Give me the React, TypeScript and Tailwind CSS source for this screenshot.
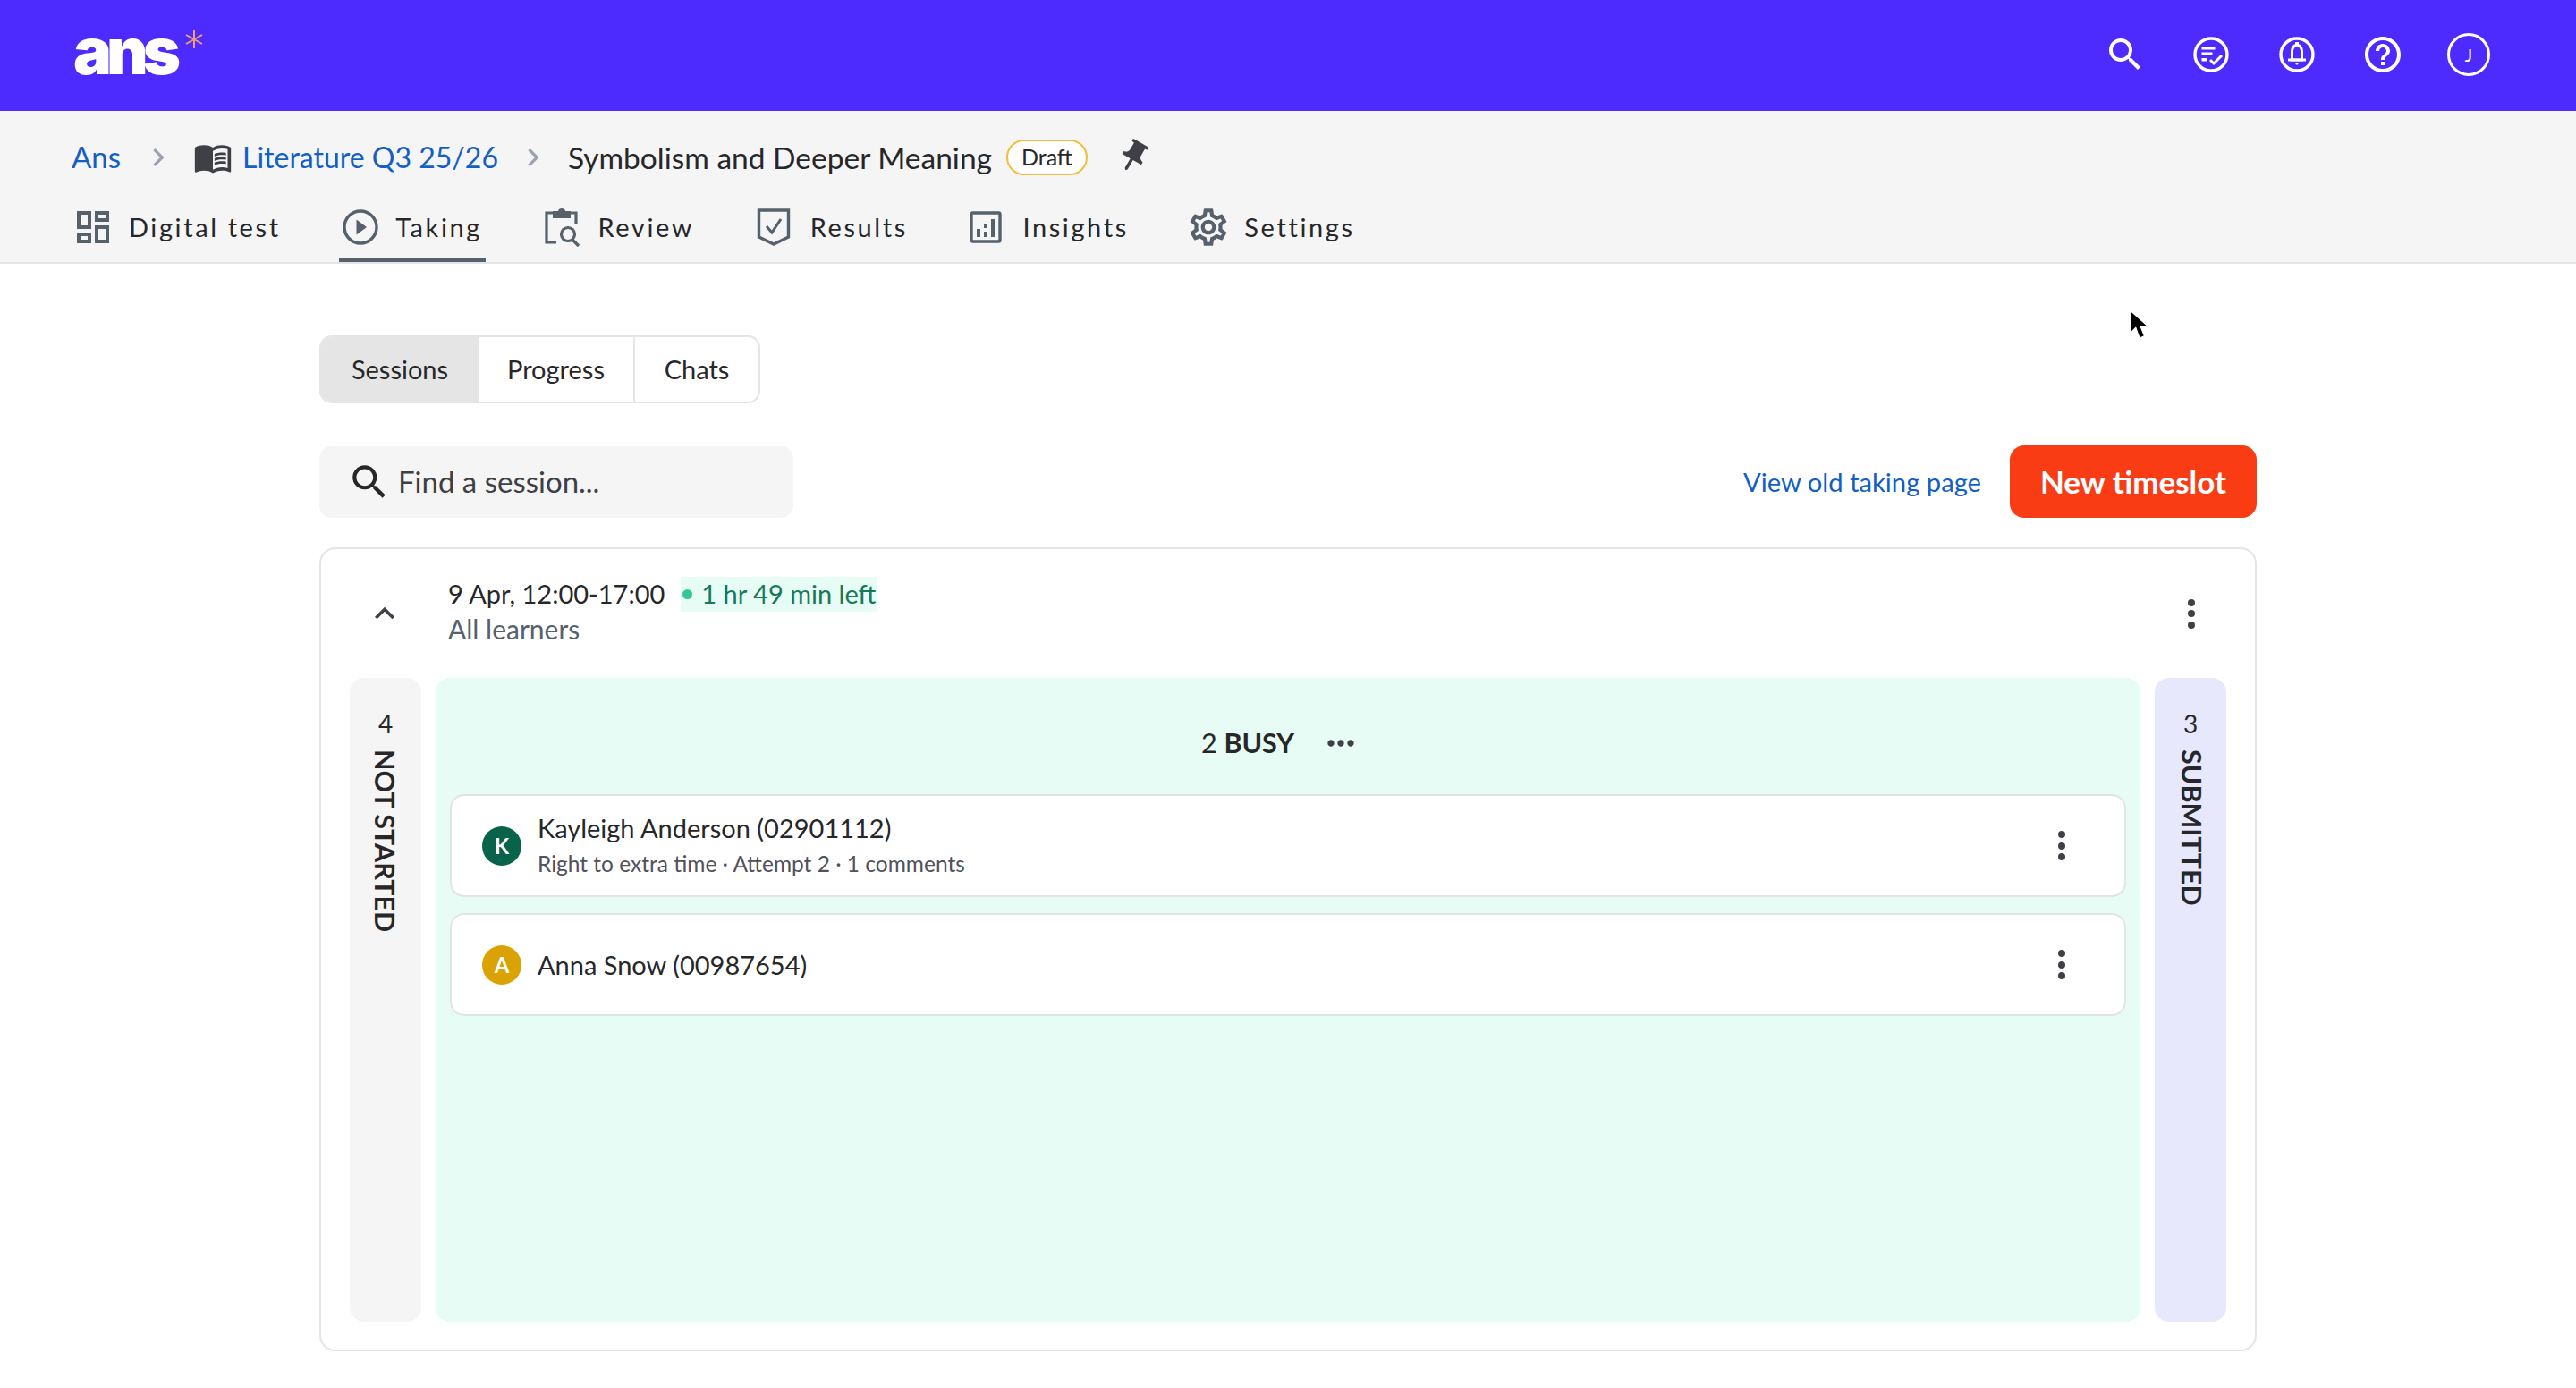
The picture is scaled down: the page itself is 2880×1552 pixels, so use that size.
import { MdMenuBook, MdMoreHoriz, MdOutlineDashboard, MdOutlineHelpOutline, MdOutlineSettings, MdPushPin, MdSearch, MdChevronRight, MdKeyboardArrowUp } from 'react-icons/md';

const font = "font-['Lato','Noto_Sans',sans-serif]";

function PlayIcon() {
  return (
    <svg viewBox="0 0 40 40" className="w-[40px] h-[40px]" fill="none">
      <circle cx="20" cy="20" r="18" stroke="#56616c" strokeWidth="3.4" />
      <path d="M15.5 11.5 27 20l-11.5 8.5z" fill="#56616c" />
    </svg>
  );
}

function ReviewIcon() {
  return (
    <svg viewBox="0 0 42 44" className="w-[42px] h-[44px]" fill="none">
      <path d="M14 6H3v33h11" stroke="#56616c" strokeWidth="3.2" />
      <path d="M27 6h9v13" stroke="#56616c" strokeWidth="3.2" />
      <path d="M10 4h6c0-4 8-4 8 0h6v8H10z" fill="#56616c" />
      <circle cx="27" cy="30" r="7.5" stroke="#56616c" strokeWidth="3.2" />
      <path d="m32 36 7 7" stroke="#56616c" strokeWidth="3.4" />
    </svg>
  );
}

function ShieldIcon() {
  return (
    <svg viewBox="0 0 38 44" className="w-[38px] h-[44px]" fill="none">
      <path d="M2.5 3h33v30L19 41 2.5 33z" stroke="#56616c" strokeWidth="3.4" />
      <path d="m11 21 6 7 10-15" stroke="#56616c" strokeWidth="3" />
    </svg>
  );
}

function InsightsIcon() {
  return (
    <svg viewBox="0 0 36 36" className="w-[36px] h-[36px]" fill="none">
      <rect x="2" y="2" width="32" height="32" rx="1.5" stroke="#56616c" strokeWidth="3.4" />
      <path d="M8 20h4v9H8zM16 23h4v6h-4zM16 15h4v4h-4zM24 9h4v20h-4z" fill="#56616c" />
    </svg>
  );
}

function ChecklistCircle() {
  return (
    <svg viewBox="0 0 40 40" className="w-[40px] h-[40px]" fill="none">
      <circle cx="20" cy="20" r="18" stroke="white" strokeWidth="3.4" />
      <path d="M9.500 11h15v3.500h-15zM9.500 17.500h12V21h-12zM9.500 24h6v3.500h-6z" fill="white" />
      <path d="m19 26 4 4 9-9" stroke="white" strokeWidth="3" />
    </svg>
  );
}

function BellCircle() {
  return (
    <svg viewBox="0 0 40 40" className="w-[40px] h-[40px]" fill="none">
      <circle cx="20" cy="20" r="18" stroke="white" strokeWidth="3.4" />
      <path d="M20 9c-3.500 1-5.500 3.500-5.500 7.500V26h11v-9.500C25.500 12.500 23.500 10 20 9z" stroke="white" strokeWidth="3" />
      <path d="M10 26h20" stroke="white" strokeWidth="3" />
      <path d="M17 29h6l-3 3z" fill="white" />
      <path d="M18 6h4v4h-4z" fill="white" />
    </svg>
  );
}

function Kebab({ className }: { className: string }) {
  return (
    <span className={`flex flex-col items-center justify-between w-[10px] h-[33px] ${className}`}>
      <span className="w-[8px] h-[8px] rounded-full bg-[#3f3f46]" />
      <span className="w-[8px] h-[8px] rounded-full bg-[#3f3f46]" />
      <span className="w-[8px] h-[8px] rounded-full bg-[#3f3f46]" />
    </span>
  );
}

const tabs = [
  { label: 'Digital test', icon: <MdOutlineDashboard className="text-[48px] text-[#56616c] mx-[-6px]" />, gap: 'gap-[22px]' },
  { label: 'Taking', icon: <PlayIcon />, active: true, gap: 'gap-[19px]' },
  { label: 'Review', icon: <ReviewIcon />, gap: 'gap-[18px]' },
  { label: 'Results', icon: <ShieldIcon />, gap: 'gap-[22px]' },
  { label: 'Insights', icon: <InsightsIcon />, gap: 'gap-[23px]' },
  { label: 'Settings', icon: <MdOutlineSettings className="text-[50px] text-[#56616c] mx-[-5px]" />, gap: 'gap-[20px]' },
];

function Student({ initial, color, name, sub }: { initial: string; color: string; name: string; sub?: string }) {
  return (
    <div className="flex items-center h-[115px] bg-white rounded-[16px] border-2 border-[#e2e4e4] pl-[34px] pr-[65px]">
      <div className={`w-[44px] h-[44px] rounded-full flex items-center justify-center text-white text-[24px] font-bold ${color}`}>{initial}</div>
      <div className={`ml-[18px] flex-1 ${sub ? 'mb-[2px]' : ''}`}>
        <div className="text-[29px] leading-[38px] text-[#27272a]">{name}</div>
        {sub && <div className="text-[24.500px] leading-[34px] mt-[4px] text-[#52525b]">{sub}</div>}
      </div>
      <Kebab className="" />
    </div>
  );
}

function SideColumn({ count, label, color, labelClass }: { count: string; label: string; color: string; labelClass?: string }) {
  return (
    <div className={`w-[80px] shrink-0 rounded-[16px] flex flex-col items-center pt-[34px] ${color}`}>
      <div className="text-[28px] leading-[34px] text-[#27272a]">{count}</div>
      <div className={`mt-[12px] text-[30.500px] leading-[30px] font-bold text-[#27272a] [writing-mode:vertical-rl] ${labelClass ?? ''}`}>{label}</div>
    </div>
  );
}

export default function App() {
  return (
    <div className={`relative min-h-[1552px] bg-white ${font}`}>
      {/* top bar */}
      <header className="h-[124px] bg-[#4d2bff] flex items-center justify-between pl-[82px] pr-[96px]">
        <div className="flex items-start">
          <span className="text-[72px] leading-[72px] font-['Inter'] font-black tracking-[-6px] text-white mt-[-10px]">ans</span>
          <svg viewBox="0 0 20 20" className="w-[20px] h-[20px] ml-[11px] mt-[3px]" stroke="#f0a070" strokeWidth="2">
            <path d="M10 0v20M1 5l18 10M19 5 1 15" />
          </svg>
        </div>
        <div className="flex items-center gap-[56px] mb-[3px]">
          <MdSearch className="text-[48px] text-white mr-[-4px]" />
          <ChecklistCircle />
          <BellCircle />
          <MdOutlineHelpOutline className="text-[48px] text-white mx-[-4px]" />
          <div className="w-[48px] h-[48px] rounded-full border-[3px] border-white flex items-center justify-center text-white text-[20px] ml-[-4px]">J</div>
        </div>
      </header>

      {/* breadcrumb + tabs */}
      <div className="h-[171px] pt-[26px] bg-[#f5f5f6] border-b-2 border-[#e5e5e5]">
        <div className="flex items-center h-[52px] pl-[80px] text-[33px]">
          <span className="text-[#1360c4]">Ans</span>
          <MdChevronRight className="text-[40px] text-[#9ca3af] ml-[22px] mr-[19px]" />
          <MdMenuBook className="text-[44px] text-[#3f3f46]" />
          <span className="text-[#1360c4] text-[32px] ml-[11px]">Literature Q3 25/26</span>
          <MdChevronRight className="text-[40px] text-[#9ca3af] ml-[19px] mr-[19px]" />
          <span className="text-[#27272a] text-[33.500px]">Symbolism and Deeper Meaning</span>
          <span className="ml-[16px] h-[40px] w-[91px] rounded-full bg-white border-2 border-[#f0bd3c] flex items-center justify-center text-[25px] text-[#27272a]">Draft</span>
          <MdPushPin className="text-[42px] text-[#3f3f46] ml-[30px] rotate-[30deg] mt-[-3px]" />
        </div>
        <nav className="flex items-stretch pl-[82px] gap-[61.500px] mt-[16px]">
          {tabs.map((t) => (
            <div key={t.label} className={`flex items-center px-[4px] ${t.gap} border-b-4 ${t.active ? 'border-[#56616c]' : 'border-transparent'} h-[75px]`}>
              {t.icon}
              <span className="text-[29px] tracking-[2.600px] text-[#27272a]">{t.label}</span>
            </div>
          ))}
        </nav>
      </div>

      <main className="w-[2166px] mx-auto pt-[80px]">
        {/* sub tabs */}
        <div className="flex w-[493px] h-[76px] rounded-[14px] border-2 border-[#e5e5e5] overflow-hidden text-[29px] text-[#27272a]">
          <div className="w-[176px] flex items-center justify-center bg-[#e5e5e5]">Sessions</div>
          <div className="w-[175px] flex items-center justify-center border-r-2 border-[#e5e5e5]">Progress</div>
          <div className="flex-1 flex items-center justify-center">Chats</div>
        </div>

        {/* toolbar */}
        <div className="flex items-center justify-between mt-[47px]">
          <div className="w-[530px] h-[80px] rounded-[14px] bg-[#f5f5f5] flex items-center pl-[31px]">
            <MdSearch className="text-[50px] text-[#27272a]" />
            <span className="ml-[7px] text-[33px] text-[#3f3f46]">Find a session...</span>
          </div>
          <div className="flex items-center">
            <span className="text-[29.200px] text-[#1360c4]">View old taking page</span>
            <button className="ml-[32px] w-[276px] h-[81px] rounded-[16px] bg-[#fa3c14] text-white text-[35px] font-bold">New timeslot</button>
          </div>
        </div>

        {/* session card */}
        <section className="mt-[33px] h-[899px] rounded-[18px] border-2 border-[#e5e5e5]">
          <div className="flex items-center h-[144px]">
            <MdKeyboardArrowUp className="text-[44px] text-[#3f3f46] ml-[49px]" />
            <div className="ml-[49px] flex-1 mb-[6px]">
              <div className="flex items-center text-[29px] text-[#27272a] h-[40px]">
                <span>9 Apr, 12:00-17:00</span>
                <span className="ml-[18px] h-[39px] px-[2px] flex items-center bg-[#e6fcf4] text-[#17795a]">
                  <span className="w-[11px] h-[11px] rounded-full bg-[#34c796] mr-[10px]" />
                  1 hr 49 min left
                </span>
              </div>
              <div className="text-[30px] leading-[38px] text-[#56616c]">All learners</div>
            </div>
            <Kebab className="mr-[66px]" />
          </div>
          <div className="flex gap-[16px] h-[720px] px-[32px]">
            <SideColumn count="4" label="NOT STARTED" color="bg-[#f5f5f5]" />
            <div className="flex-1 rounded-[16px] bg-[#e6fcf4] px-[16px]">
              <div className="h-[130px] pt-[16px] pr-[16px] flex items-center justify-center text-[30.500px] text-[#27272a]">
                <span>2 <b className="font-bold">BUSY</b></span>
                <MdMoreHoriz className="text-[44px] text-[#3f3f46] ml-[30px]" />
              </div>
              <div className="flex flex-col gap-[18px]">
                <Student initial="K" color="bg-[#07634a]" name="Kayleigh Anderson (02901112)" sub="Right to extra time · Attempt 2 · 1 comments" />
                <Student initial="A" color="bg-[#dba204]" name="Anna Snow (00987654)" />
              </div>
            </div>
            <SideColumn count="3" label="SUBMITTED" color="bg-[#e8e8fc]" labelClass="ml-[4px]" />
          </div>
        </section>
      </main>

      {/* mouse pointer */}
      <svg viewBox="0 0 20 32" className="absolute left-[2380px] top-[346px] w-[22px] h-[34px]">
        <path d="M1 1v24l6-6 4 11 5-2-4-10h8z" fill="black" stroke="white" strokeWidth="1" />
      </svg>
    </div>
  );
}
